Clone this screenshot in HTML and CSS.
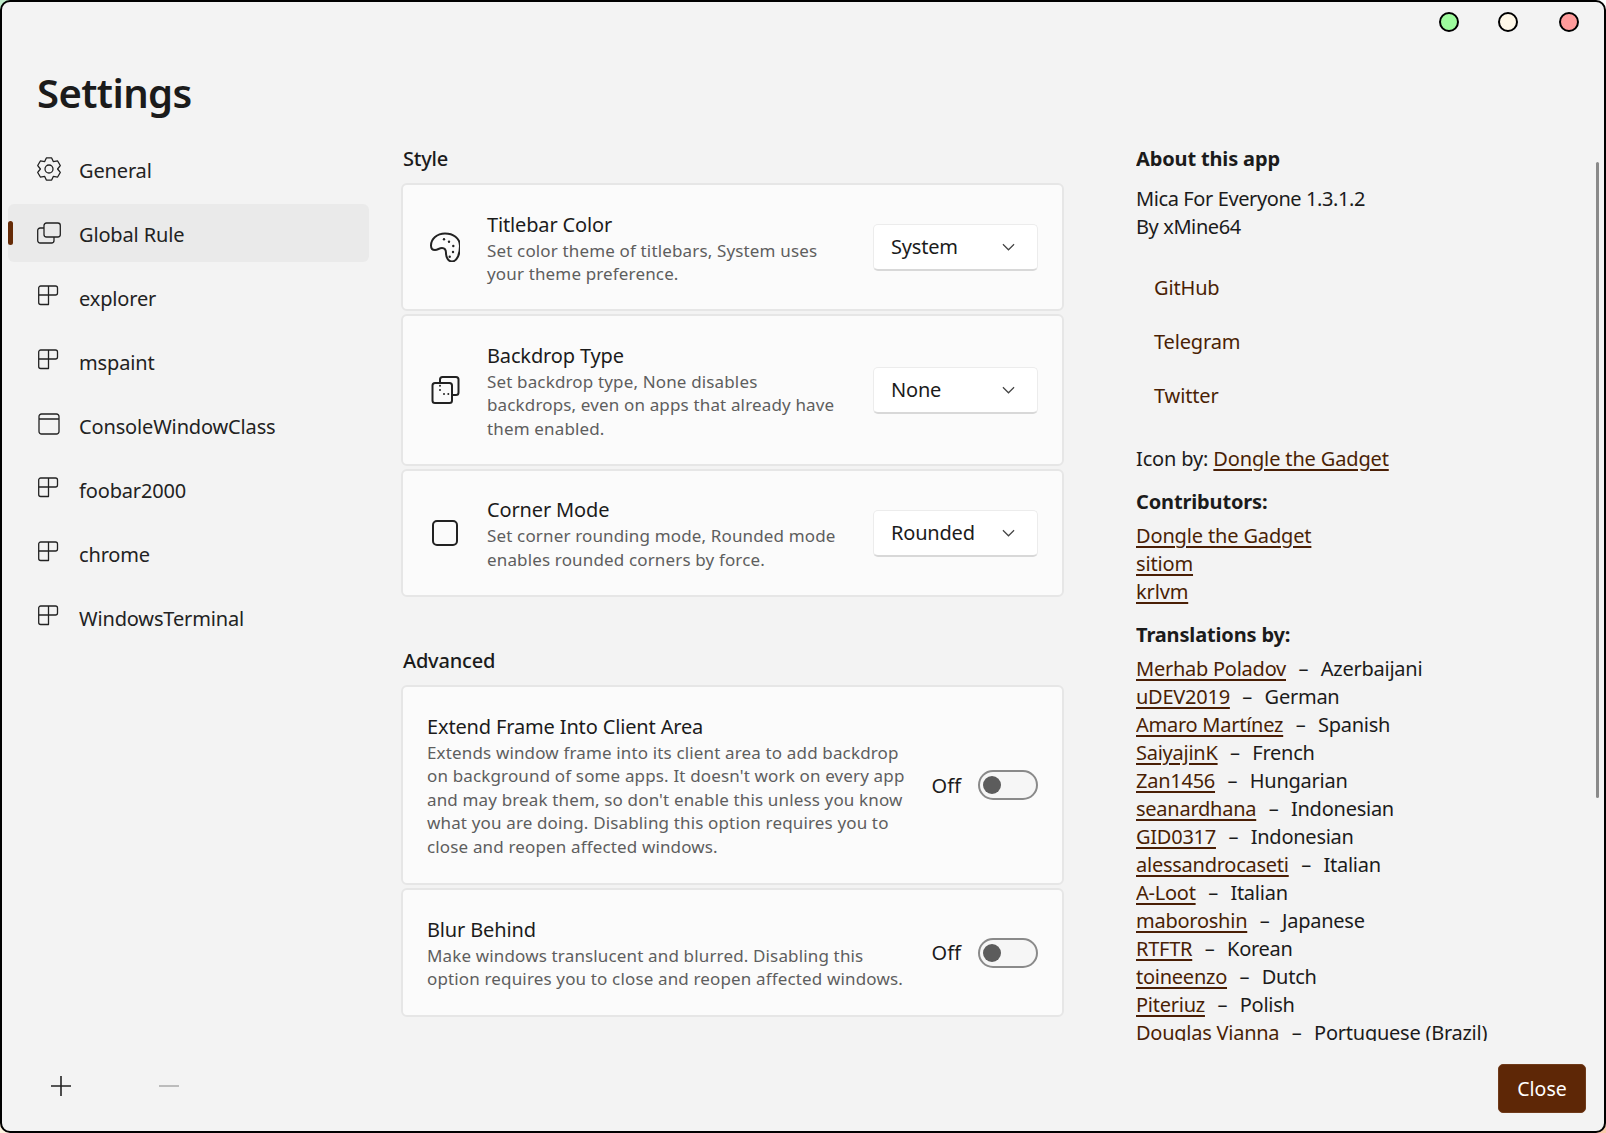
FILE: index.html
```html
<!DOCTYPE html>
<html lang="en">
<head>
<meta charset="utf-8">
<title>Settings</title>
<link rel="stylesheet" href="styles.css">
</head>
<body>
<div class="window">
  <div class="titlebar">
    <span class="dot dot-green"></span>
    <span class="dot dot-cream"></span>
    <span class="dot dot-red"></span>
  </div>
  <div class="main">
    <aside class="sidebar">
      <h1 class="app-title">Settings</h1>
      <nav class="nav">
        <div class="nav-item"><svg class="nav-icon" viewBox="0 0 24 24"><path d="M9.35 .9h5.3l1.65 3.65 4.33-.6 2.65 4.6-2.68 3.45 2.68 3.45-2.65 4.6-4.33-.6-1.65 3.65h-5.3l-1.65-3.65-4.33.6-2.65-4.6 2.68-3.45-2.68-3.45 2.65-4.6 4.33.6z"/><circle cx="12" cy="12" r="4"/></svg><span>General</span></div>
        <div class="nav-item nav-item-active"><svg class="nav-icon" viewBox="0 0 24 24"><rect x="7" y="2" width="16.300" height="14" rx="2.500"/><path d="M7 7H3.200A2.500 2.500 0 0 0 .7 9.500v10A2.500 2.500 0 0 0 3.200 22h11.300a2.500 2.500 0 0 0 2.500-2.500V16"/></svg><span>Global Rule</span></div>
        <div class="nav-item"><svg class="nav-icon" viewBox="0 0 24 24"><use href="#grid"/></svg><span>explorer</span></div>
        <div class="nav-item"><svg class="nav-icon" viewBox="0 0 24 24"><use href="#grid"/></svg><span>mspaint</span></div>
        <div class="nav-item"><svg class="nav-icon" viewBox="0 0 24 24"><path d="M4.500 1h15A2.500 2.500 0 0 1 22 3.500v15a2.500 2.500 0 0 1-2.500 2.500h-15A2.500 2.500 0 0 1 2 18.500v-15A2.500 2.500 0 0 1 4.500 1zM2 6h20"/></svg><span>ConsoleWindowClass</span></div>
        <div class="nav-item"><svg class="nav-icon" viewBox="0 0 24 24"><use href="#grid"/></svg><span>foobar2000</span></div>
        <div class="nav-item"><svg class="nav-icon" viewBox="0 0 24 24"><use href="#grid"/></svg><span>chrome</span></div>
        <div class="nav-item"><svg class="nav-icon" viewBox="0 0 24 24"><use href="#grid"/></svg><span>WindowsTerminal</span></div>
      </nav>
      <div class="side-actions">
        <svg class="action-icon" viewBox="0 0 20 20"><path d="M0 10h20M10 0v20"/></svg>
        <svg class="action-icon action-icon-off" viewBox="0 0 20 20"><path d="M0 10h20"/></svg>
      </div>
    </aside>
    <main class="content">
      <h2 class="section-title">Style</h2>
      <section class="card card-icon-row">
        <svg class="card-icon" viewBox="5 6 30 30"><path d="M20 7.500C12 7.500 6 13 6 19.500 6 22 7.500 24 10 24c3 0 4-2 7-2 3 0 4 2 4 5 0 4 2 8.500 6 8.500 5 0 8-7.500 8-15.500C35 12 28 7.500 20 7.500z"/><circle class="dot-fill" cx="19" cy="13.300" r="1.200"/><circle class="dot-fill" cx="24" cy="15.700" r="1.200"/><circle class="dot-fill" cx="28.300" cy="20" r="1.200"/><circle class="dot-fill" cx="28" cy="26" r="1.200"/><circle class="dot-fill" cx="24.700" cy="30.700" r="1.200"/></svg>
        <div class="card-text">
          <div class="card-title">Titlebar Color</div>
          <div class="card-desc">Set color theme of titlebars, System uses<br>your theme preference.</div>
        </div>
        <div class="select"><span>System</span><svg class="chevron" viewBox="0 0 14 8"><path d="M1 1l6 6 6-6"/></svg></div>
      </section>
      <section class="card card-icon-row">
        <svg class="card-icon" viewBox="5 5 30 30"><rect x="7.500" y="13" width="19.500" height="20" rx="2.500"/><path d="M15 13V9.500A2.500 2.500 0 0 1 17.500 7H31a2.500 2.500 0 0 1 2.500 2.500v13A2.500 2.500 0 0 1 31 25h-4"/><circle class="dot-fill" cx="15" cy="15.700" r="1"/><circle class="dot-fill" cx="15" cy="20" r="1"/><circle class="dot-fill" cx="19" cy="24" r="1"/><circle class="dot-fill" cx="23.300" cy="24" r="1"/></svg>
        <div class="card-text">
          <div class="card-title">Backdrop Type</div>
          <div class="card-desc">Set backdrop type, None disables<br>backdrops, even on apps that already have<br>them enabled.</div>
        </div>
        <div class="select"><span>None</span><svg class="chevron" viewBox="0 0 14 8"><path d="M1 1l6 6 6-6"/></svg></div>
      </section>
      <section class="card card-icon-row">
        <svg class="card-icon" viewBox="0 0 30 30"><rect x="3" y="3" width="24" height="24" rx="4"/></svg>
        <div class="card-text">
          <div class="card-title">Corner Mode</div>
          <div class="card-desc">Set corner rounding mode, Rounded mode<br>enables rounded corners by force.</div>
        </div>
        <div class="select"><span>Rounded</span><svg class="chevron" viewBox="0 0 14 8"><path d="M1 1l6 6 6-6"/></svg></div>
      </section>
      <h2 class="section-title section-title-second">Advanced</h2>
      <section class="card card-plain-row">
        <div class="card-text">
          <div class="card-title">Extend Frame Into Client Area</div>
          <div class="card-desc">Extends window frame into its client area to add backdrop<br>on background of some apps. It doesn't work on every app<br>and may break them, so don't enable this unless you know<br>what you are doing. Disabling this option requires you to<br>close and reopen affected windows.</div>
        </div>
        <div class="toggle-wrap"><span>Off</span><span class="toggle"><span class="knob"></span></span></div>
      </section>
      <section class="card card-plain-row">
        <div class="card-text">
          <div class="card-title">Blur Behind</div>
          <div class="card-desc">Make windows translucent and blurred. Disabling this<br>option requires you to close and reopen affected windows.</div>
        </div>
        <div class="toggle-wrap"><span>Off</span><span class="toggle"><span class="knob"></span></span></div>
      </section>
    </main>
    <aside class="about">
      <div class="about-scroll">
        <h3 class="about-head">About this app</h3>
        <p class="about-par">Mica For Everyone 1.3.1.2<br>By xMine64</p>
        <div class="link-buttons">
          <span class="link-btn">GitHub</span>
          <span class="link-btn">Telegram</span>
          <span class="link-btn">Twitter</span>
        </div>
        <p class="icon-by">Icon by: <a href="#">Dongle the Gadget</a></p>
        <h3 class="about-head about-head-sub">Contributors:</h3>
        <ul class="people">
          <li><a href="#">Dongle the Gadget</a></li>
          <li><a href="#">sitiom</a></li>
          <li><a href="#">krlvm</a></li>
        </ul>
        <h3 class="about-head about-head-sub">Translations by:</h3>
        <ul class="people people-tight">
          <li><a href="#">Merhab Poladov</a><span class="sep">–</span>Azerbaijani</li>
          <li><a href="#">uDEV2019</a><span class="sep">–</span>German</li>
          <li><a href="#">Amaro Martínez</a><span class="sep">–</span>Spanish</li>
          <li><a href="#">SaiyajinK</a><span class="sep">–</span>French</li>
          <li><a href="#">Zan1456</a><span class="sep">–</span>Hungarian</li>
          <li><a href="#">seanardhana</a><span class="sep">–</span>Indonesian</li>
          <li><a href="#">GID0317</a><span class="sep">–</span>Indonesian</li>
          <li><a href="#">alessandrocaseti</a><span class="sep">–</span>Italian</li>
          <li><a href="#">A-Loot</a><span class="sep">–</span>Italian</li>
          <li><a href="#">maboroshin</a><span class="sep">–</span>Japanese</li>
          <li><a href="#">RTFTR</a><span class="sep">–</span>Korean</li>
          <li><a href="#">toineenzo</a><span class="sep">–</span>Dutch</li>
          <li><a href="#">Piteriuz</a><span class="sep">–</span>Polish</li>
          <li><a href="#">Douglas Vianna</a><span class="sep">–</span>Portuguese (Brazil)</li>
        </ul>
      </div>
      <span class="scrollbar"></span>
      <div class="about-footer"><span class="close-btn">Close</span></div>
    </aside>
  </div>
</div>
<svg class="defs" aria-hidden="true"><defs><g id="grid"><path d="M3.700 1H11.500V10H1.700V3A2 2 0 0 1 3.700 1zM11.500 1h7a2 2 0 0 1 2 2v5a2 2 0 0 1-2 2h-7M1.700 10h9.800v9.500H3.700a2 2 0 0 1-2-2z"/></g></defs></svg>
</body>
</html>
```
FILE: styles.css
```css
* { box-sizing: border-box; }
html, body { margin: 0; padding: 0; }
body {
  width: 1606px;
  height: 1133px;
  overflow: hidden;
  background:
    linear-gradient(to right, #bfeccb 0, #bfeccb 50%, #fff 50%, #fff 100%) top / 100% 50% no-repeat,
    linear-gradient(to right, #fdf3e0 0, #fdf3e0 50%, #f9c9aa 50%, #f9c9aa 100%) bottom / 100% 50% no-repeat;
  font-family: "Noto Sans", "Open Sans", sans-serif;
  color: #1b1b1b;
}
.window {
  width: 1606px;
  height: 1133px;
  border: 2px solid #000;
  border-radius: 10px;
  background: #f3f3f3;
  display: flex;
  flex-direction: column;
  overflow: hidden;
}
.titlebar {
  height: 40px;
  flex: none;
  display: flex;
  justify-content: flex-end;
  align-items: center;
  padding-right: 25px;
  gap: 39px;
}
.dot {
  width: 20px;
  height: 20px;
  border-radius: 50%;
  border: 2px solid #000;
}
.dot-green { background: #9dfc9d; }
.dot-cream { background: #fff8e8; margin-right: 2px; }
.dot-red { background: #ff9b9b; }
.main { flex: 1; display: flex; min-height: 0; }

.sidebar {
  width: 399px;
  flex: none;
  display: flex;
  flex-direction: column;
  padding-left: 6px;
}
.app-title {
  margin: 23px 0 0 29px;
  font-size: 40px;
  line-height: 56px;
  font-weight: 600;
  letter-spacing: -0.6px;
}
.nav { margin-top: 19px; flex: 1; }
.nav-item {
  width: 361px;
  height: 58px;
  margin-bottom: 6px;
  display: flex;
  align-items: center;
  gap: 18px;
  padding-left: 29px;
  border-radius: 6px;
  font-size: 20px;
  letter-spacing: -0.15px;
  color: #222;
  position: relative;
}
.nav-item span { padding-top: 2px; }
.nav-item-active { background: #eaeaea; }
.nav-item-active::before {
  content: "";
  position: absolute;
  left: 0;
  top: 17px;
  width: 5px;
  height: 24px;
  border-radius: 3px;
  background: #662b07;
}
.nav-icon {
  width: 24px;
  height: 24px;
  flex: none;
  fill: none;
  stroke: #222;
  stroke-width: 1.300;
  stroke-linejoin: round;
}
.side-actions {
  height: 96px;
  flex: none;
  display: flex;
  align-items: flex-start;
  gap: 88px;
  padding: 41px 0 0 43px;
}
.action-icon { width: 20px; height: 20px; fill: none; stroke: #222; stroke-width: 1.600; }
.action-icon-off { stroke: #aaa; }

.content { width: 735px; flex: none; padding-top: 102px; }
.section-title {
  margin: 0 0 9px 2px;
  font-size: 20px;
  line-height: 30px;
  font-weight: 550;
  letter-spacing: -0.2px;
}
.section-title-second { margin-top: 49px; margin-bottom: 9px; }
.card {
  width: 663px;
  display: flex;
  align-items: center;
  background: #fbfbfb;
  border: 2px solid #e6e6e6;
  border-radius: 6px;
  margin-bottom: 3px;
}
.card-icon-row { padding: 22.500px 24px 22.500px 27px; }
.card-plain-row { padding: 22.500px 24px 23.500px 24px; }
.card-icon {
  width: 30px;
  height: 30px;
  flex: none;
  margin-right: 27px;
  fill: none;
  stroke: #222;
  stroke-width: 2;
}
.dot-fill { fill: #222; stroke: none; }
.card-text { flex: 1; min-width: 0; padding: 3px 0 1px; }
.card-title {
  font-size: 20px;
  line-height: 28px;
  letter-spacing: -0.15px;
}
.card-desc {
  font-size: 17px;
  line-height: 23.600px;
  color: #5e5e5e;
  letter-spacing: 0.15px;
  white-space: nowrap;
}
.select {
  width: 165px;
  height: 47px;
  flex: none;
  display: flex;
  align-items: center;
  justify-content: space-between;
  padding: 0 22px 0 17px;
  background: #fff;
  border: 1.500px solid #ececec;
  border-bottom: 2.500px solid #d8d8d8;
  border-radius: 5px;
  font-size: 20px;
  letter-spacing: -0.2px;
}
.chevron { width: 13px; height: 8px; fill: none; stroke: #444; stroke-width: 1.300; }
.toggle-wrap { display: flex; align-items: center; gap: 17px; font-size: 20px; flex: none; margin-top: 1px; }
.toggle {
  width: 60px;
  height: 30px;
  border: 2px solid #8a8a8a;
  border-radius: 15px;
  background: #f6f6f6;
  display: flex;
  align-items: center;
  padding-left: 3px;
}
.knob { width: 18px; height: 18px; border-radius: 50%; background: #5c5c5c; }

.about { flex: 1; min-width: 0; display: flex; flex-direction: column; position: relative; }
.about-scroll {
  flex: 1;
  min-height: 0;
  overflow: hidden;
  padding-top: 102px;
  font-size: 20px;
  line-height: 28px;
  letter-spacing: -0.15px;
}
.about-head { margin: 0; font-size: 20px; line-height: 30px; font-weight: 700; letter-spacing: -0.15px; }
.about-head-sub { margin-top: 14px; }
.about-par { margin: 11px 0 0; letter-spacing: -0.4px; }
.link-buttons { display: flex; flex-direction: column; align-items: flex-start; gap: 26px; margin-top: 33px; padding-left: 18px; }
.link-btn { color: #4a1f05; }
.icon-by { margin: 35px 0 0; }
a { color: #4a1f05; text-decoration: underline; text-underline-offset: 3px; }
.people { list-style: none; margin: 5px 0 0; padding: 0; }
.people-tight { letter-spacing: -0.25px; }
.sep { margin: 0 12.500px; }
.scrollbar {
  position: absolute;
  right: 5px;
  top: 120px;
  width: 3px;
  height: 636px;
  border-radius: 2px;
  background: #8a8a8a;
}
.about-footer { height: 90px; flex: none; display: flex; justify-content: flex-end; padding: 23px 18px 0 0; }
.close-btn {
  width: 88px;
  height: 49px;
  display: flex;
  align-items: center;
  justify-content: center;
  background: #5e2706;
  border: 1px solid #6f3a1a;
  border-radius: 5px;
  color: #fff;
  font-size: 19.500px;
}
.defs { width: 0; height: 0; position: absolute; }
```
